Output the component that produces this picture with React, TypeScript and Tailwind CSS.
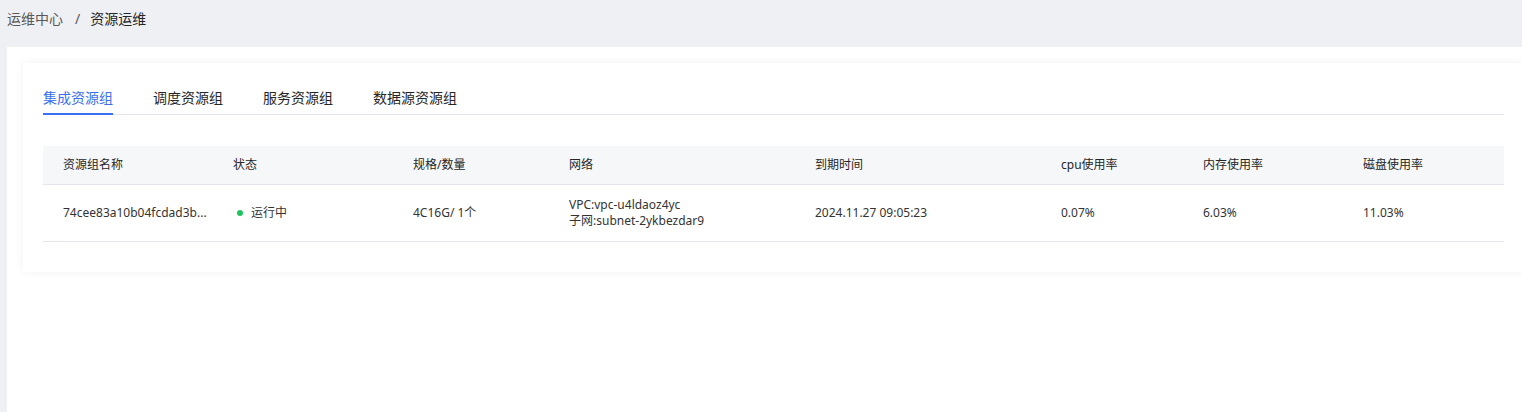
import React from "react";

const cols = [
  { title: "资源组名称", w: 170 },
  { title: "状态", w: 180 },
  { title: "规格/数量", w: 156 },
  { title: "网络", w: 246 },
  { title: "到期时间", w: 246 },
  { title: "cpu使用率", w: 142 },
  { title: "内存使用率", w: 160 },
  { title: "磁盘使用率", w: 161 },
];

export default function App() {
  const font = { fontFamily: '"Noto Sans", "Noto Sans CJK SC", sans-serif' };
  return (
    <div className="w-[1522px] h-[412px] overflow-hidden bg-[#eff0f4]" style={font}>
      <div className="h-[47px] flex items-center pl-[7px] pb-[10px] text-[14px]">
        <span className="text-[#595959]">运维中心</span>
        <span className="text-[#595959] ml-[12px] mr-[10px]">/</span>
        <span className="text-[#262626]">资源运维</span>
      </div>
      <div className="ml-[7px] w-[1540px] h-[400px] bg-white pt-[16px] pl-[16px]">
        <div className="w-[1501px] h-[209px] bg-white shadow-[0_0_8px_rgba(0,0,0,0.06)] px-[20px] pt-[24px]">
          <div className="flex gap-[40px] border-b border-[#e4e4ef] h-[28px]">
            {["集成资源组", "调度资源组", "服务资源组", "数据源资源组"].map((t, i) => (
              <div
                key={t}
                className={
                  i === 0
                    ? "text-[14px] leading-[22px] text-[#3b6ef0] border-b-2 border-[#3b6ef0] h-[28px]"
                    : "text-[14px] leading-[22px] text-[#262626] h-[28px]"
                }
              >
                {t}
              </div>
            ))}
          </div>
          <div className="mt-[31px] text-[12px]">
            <div className="flex h-[39px] bg-[#f6f7f9] border-b border-[#e3e5ea] items-center">
              {cols.map((c) => (
                <div key={c.title} className="px-[20px] text-[#262626]" style={{ width: c.w }}>
                  {c.title}
                </div>
              ))}
            </div>
            <div className="flex h-[57px] border-b border-[#e3e5ea] items-center text-[#333333]">
              <div className="px-[20px] w-[170px] whitespace-nowrap">74cee83a10b04fcdad3b...</div>
              <div className="px-[20px] w-[180px] flex items-center">
                <span className="w-[6px] h-[6px] rounded-full bg-[#1fc35f] ml-[4px] mr-[8px]"></span>
                <span>运行中</span>
              </div>
              <div className="px-[20px] w-[156px]">4C16G/ 1个</div>
              <div className="px-[20px] w-[246px] leading-[16px]">
                <div>VPC:vpc-u4ldaoz4yc</div>
                <div>子网:subnet-2ykbezdar9</div>
              </div>
              <div className="px-[20px] w-[246px]">2024.11.27 09:05:23</div>
              <div className="px-[20px] w-[142px]">0.07%</div>
              <div className="px-[20px] w-[160px]">6.03%</div>
              <div className="px-[20px] w-[161px]">11.03%</div>
            </div>
          </div>
        </div>
      </div>
    </div>
  );
}
